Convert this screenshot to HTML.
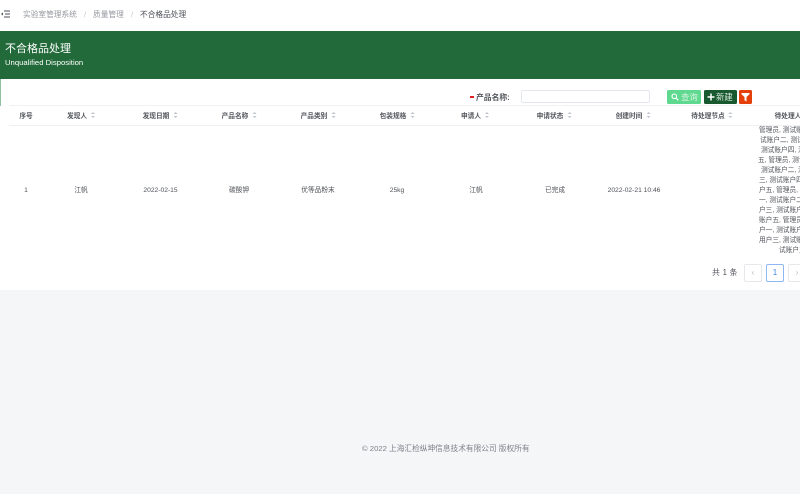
<!DOCTYPE html>
<html lang="zh"><head><meta charset="utf-8">
<style>
html,body{margin:0;padding:0;width:800px;height:496px;overflow:hidden;background:#f5f6f8}
body{position:relative;font-family:"Liberation Sans","Noto Sans CJK SC",sans-serif;color:#505359;filter:blur(.3px)}
.a{position:absolute;white-space:nowrap}
.h{top:107px;height:20px;line-height:20px;font-size:6.7px;font-weight:700;color:#54575d;transform:translateX(-50%)}
.h i{display:inline-block;width:4px;height:7px;margin-left:4px;vertical-align:-1px;position:relative}
.h i:before{content:"";position:absolute;left:0;top:0;border:2px solid transparent;border-top:0;border-bottom:2.500px solid #c0c4cc}
.h i:after{content:"";position:absolute;left:0;top:4px;border:2px solid transparent;border-bottom:0;border-top:2.500px solid #c0c4cc}
.c{top:181px;height:20px;line-height:20px;font-size:6.7px;color:#505359;transform:translateX(-50%)}
.u{font-size:6.700px;line-height:10px;color:#505359}
.pg{top:264px;width:18px;height:18px;box-sizing:border-box;border:1px solid #e6e8eb;border-radius:2px;background:#fff;text-align:center;line-height:16px;font-size:8px;color:#b4b8bf}
</style></head><body>
<div class="a" style="left:0;top:0;width:800px;height:31px;background:#fff"></div>
<svg class="a" style="left:1px;top:10px" width="9" height="8" viewBox="0 0 9 8"><path d="M3 1H9M4 4H9M3 7H9" stroke="#4a5058" stroke-width=".9" fill="none"/><path d="M0 4L2 2.500V5.500Z" fill="#4a5058"/></svg>
<div class="a" style="left:23px;top:9px;font-size:7.7px;line-height:11px;color:#94979e">实验室管理系统</div>
<div class="a" style="left:84px;top:9px;font-size:7.7px;line-height:11px;color:#c0c4cc">/</div>
<div class="a" style="left:93px;top:9px;font-size:7.7px;line-height:11px;color:#94979e">质量管理</div>
<div class="a" style="left:131px;top:9px;font-size:7.7px;line-height:11px;color:#c0c4cc">/</div>
<div class="a" style="left:140px;top:9px;font-size:7.7px;line-height:11px;color:#4c4f57">不合格品处理</div>

<div class="a" style="left:0;top:31px;width:800px;height:48px;background:#226a39"></div>
<div class="a" style="left:5px;top:42px;font-size:11px;line-height:15px;color:#fff">不合格品处理</div>
<div class="a" style="left:5px;top:57px;font-size:7.7px;line-height:11px;color:#fff">Unqualified Disposition</div>

<div class="a" style="left:0;top:79px;width:800px;height:211px;background:#fff"></div>
<div class="a" style="left:0;top:79px;width:1px;height:27px;background:#8fbf9f"></div>

<div class="a" style="left:470px;top:96px;width:4px;height:1.500px;background:#e02020"></div>
<div class="a" style="left:476px;top:92px;font-size:7.800px;font-weight:700;line-height:11px;color:#54575d">产品名称:</div>
<div class="a" style="left:521px;top:90px;width:129px;height:13px;box-sizing:border-box;border:1px solid #e4e7ed;border-radius:2px;background:#fff"></div>

<div class="a" style="left:667px;top:90px;width:34px;height:14px;background:#5fd98f;border-radius:1.500px;color:#d8f5e2;font-size:8.400px;line-height:14px;text-indent:14px">查询</div>
<svg class="a" style="left:671px;top:93px" width="8" height="8" viewBox="0 0 8 8"><circle cx="3.300" cy="3.300" r="2.300" stroke="#fff" stroke-width="1.100" fill="none"/><path d="M5 5L7.300 7.300" stroke="#fff" stroke-width="1.200"/></svg>
<div class="a" style="left:704px;top:90px;width:33px;height:14px;background:#19592f;border-radius:1.500px;color:#d8e8dc;font-size:8.400px;line-height:14px;text-indent:12px">新建</div>
<svg class="a" style="left:707px;top:93px" width="8" height="8" viewBox="0 0 8 8"><path d="M4 .5V7.500M.5 4H7.500" stroke="#fff" stroke-width="1.500"/></svg>
<div class="a" style="left:739px;top:90px;width:13px;height:14px;background:#e5400a;border-radius:1.500px"></div>
<svg class="a" style="left:741px;top:92px" width="9" height="10" viewBox="0 0 9 10"><path d="M.5 1H8.500V2.200L5.500 5V9.500L3.500 8.300V5L.5 2.200Z" fill="#fff"/></svg>

<div class="a" style="left:9px;top:105px;width:791px;height:1px;background:#eef0f3"></div>
<div class="a" style="left:9px;top:125px;width:791px;height:1px;background:#eef0f3"></div>

<div class="a h" style="left:26px">序号</div>
<div class="a h" style="left:81px">发现人<i></i></div>
<div class="a h" style="left:160px">发现日期<i></i></div>
<div class="a h" style="left:239px">产品名称<i></i></div>
<div class="a h" style="left:318px">产品类别<i></i></div>
<div class="a h" style="left:397px">包装规格<i></i></div>
<div class="a h" style="left:475px">申请人<i></i></div>
<div class="a h" style="left:554px">申请状态<i></i></div>
<div class="a h" style="left:633px">创建时间<i></i></div>
<div class="a h" style="left:712px">待处理节点<i></i></div>
<div class="a h" style="left:792px">待处理人<i></i></div>

<div class="a c" style="left:26px">1</div>
<div class="a c" style="left:81px">江帆</div>
<div class="a c" style="left:160.500px">2022-02-15</div>
<div class="a c" style="left:239px">碳酸钾</div>
<div class="a c" style="left:318px">优等品粉末</div>
<div class="a c" style="left:397px">25kg</div>
<div class="a c" style="left:476px">江帆</div>
<div class="a c" style="left:555px">已完成</div>
<div class="a c" style="left:634px">2022-02-21 10:46</div>

<div class="a u" style="left:759px;top:126px">管理员, 测试账</div>
<div class="a u" style="left:760px;top:136px">试账户二, 测试</div>
<div class="a u" style="left:761px;top:146px">测试账户四, 测</div>
<div class="a u" style="left:758px;top:156px">五, 管理员, 测试</div>
<div class="a u" style="left:761px;top:166px">测试账户二, 测</div>
<div class="a u" style="left:759px;top:176px">三, 测试账户四</div>
<div class="a u" style="left:759px;top:186px">户五, 管理员, 测</div>
<div class="a u" style="left:759px;top:196px">一, 测试账户二</div>
<div class="a u" style="left:759px;top:206px">户三, 测试账户</div>
<div class="a u" style="left:759px;top:216px">账户五, 管理员</div>
<div class="a u" style="left:759px;top:226px">户一, 测试账户</div>
<div class="a u" style="left:759px;top:236px">用户三, 测试账</div>
<div class="a u" style="left:779px;top:246px">试账户五</div>

<div class="a" style="left:712px;top:267px;font-size:7.800px;line-height:11px;color:#505359;letter-spacing:.3px">共 1 条</div>
<div class="a pg" style="left:744px">‹</div>
<div class="a pg" style="left:766px;border-color:#8db8f5;color:#3f86e6;font-weight:400">1</div>
<div class="a pg" style="left:788px">›</div>

<div class="a" style="left:362px;top:443px;font-size:7.700px;line-height:11px;color:#7d8188;width:168px">© 2022 上海汇检纵坤信息技术有限公司 版权所有</div>
<div class="a" style="left:0;top:494px;width:800px;height:2px;background:#fff"></div>
</body></html>
